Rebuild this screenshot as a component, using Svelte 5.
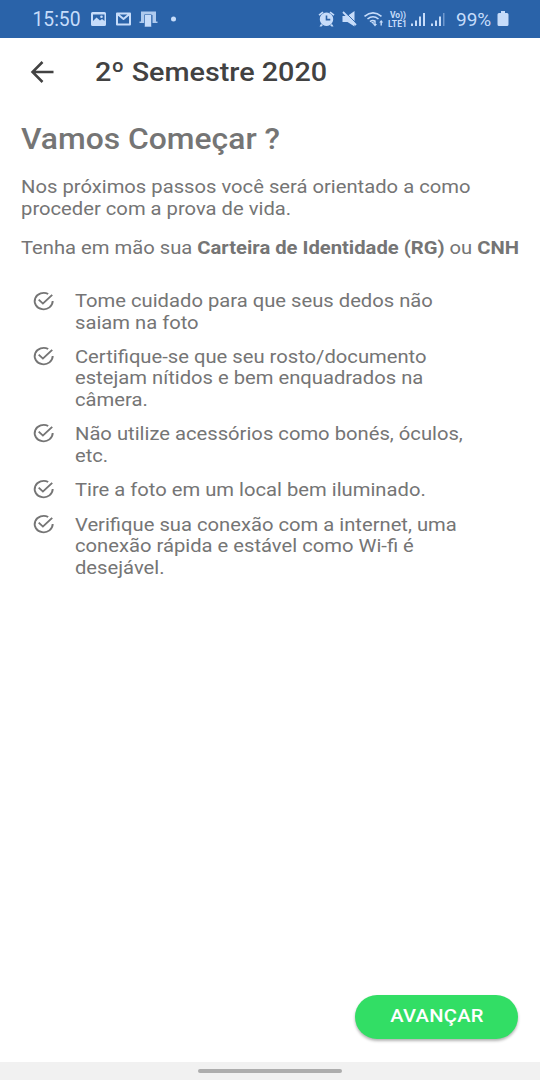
<script lang="ts">
  const tips: string[][] = [
    ["Tome cuidado para que seus dedos não", "saiam na foto"],
    ["Certifique-se que seu rosto/documento", "estejam nítidos e bem enquadrados na", "câmera."],
    ["Não utilize acessórios como bonés, óculos,", "etc."],
    ["Tire a foto em um local bem iluminado."],
    ["Verifique sua conexão com a internet, uma", "conexão rápida e estável como Wi-fi é", "desejável."],
  ];
</script>

<div class="screen">
  <header class="status">
    <span class="clock">15:50</span>
    <svg width="90" height="20" viewBox="88 9 90 20" fill="currentColor">
      <path fill-rule="evenodd" d="M92.500 12h12q1.500 0 1.500 1.500v11q0 1.500-1.500 1.500h-12q-1.500 0-1.500-1.500v-11q0-1.500 1.500-1.500zM93 14.500v6.500l3.500-3.500 3.500 3 2-1.500 2.500 2v-6.500z" />
      <circle cx="101.500" cy="16.700" r="1.300" />
      <path d="M117 24.500v-11h13v11zM117.500 14l6 5 6-5" fill="none" stroke="currentColor" stroke-width="2" stroke-linejoin="round" />
      <path d="M141 11.500h15v10h1.500v1.500h-5v-8h-8v8h-5v-1.500h1.500z" opacity=".85" />
      <rect x="144.500" y="14.500" width="7" height="12.500" rx=".5" stroke="#2a63a9" stroke-width=".6" />
      <circle cx="173.500" cy="19" r="2.500" />
    </svg>
    <svg class="signals" width="128" height="20" viewBox="318 9 128 20" fill="currentColor">
      <path d="M318.500 14.500l4-3 1 1.300-4 3zM334.500 14.500l-4-3-1 1.300 4 3zM321 24l-1.500 2.500h2l1.500-1.500zM332 24l1.500 2.500h-2l-1.500-1.500z" />
      <path fill-rule="evenodd" d="M326.500 12.500a6.700 6.700 0 1 0 .01 0zM325.700 15.500h1.600v3.300h3v1.600h-4.600z" />
      <path d="M342.500 16h5l7-5v15.500l-7-4.500h-5z" />
      <path d="M345 12l12 12" stroke="#2a63a9" stroke-width="1" />
      <path d="M343 12l13 13" stroke="currentColor" stroke-width="1.800" />
      <g fill="none" stroke="currentColor" stroke-width="1.600">
        <path d="M364.500 16.300q8.500-7 17 0M367.500 19q5.500-4.500 11 0M370 21.700q2.500-2 5-.5" />
      </g>
      <path d="M371 22.500l2.500-1 .5 3zM375.700 20.500v3.500h1.300l-2 2.500-2-2.500h1.300v-3.500zM380.500 25.500v-3h-1.300l2-2.500 2 2.500h-1.300v3z" />
      <text class="network" x="390" y="18" textLength="16">Vo))</text>
      <text class="network" x="388" y="26.500" textLength="19">LTE1</text>
      <path d="M411 23.500h2v2.500h-2zM415 20.500h2v5.500h-2zM419 16.500h2v9.500h-2zM423 13h2v13h-2zM431 23.500h2v2.500h-2zM435 20.500h2v5.500h-2zM439 16.500h2v9.500h-2z" />
      <path d="M443 13h1.500v13h-1.500z" opacity=".45" />
    </svg>
    <span class="percent">99%</span>
    <svg width="12" height="16" viewBox="0 0 12 16" fill="currentColor">
      <path d="M4 0h4v2h2q1.500 0 1.500 1.500v10q0 1.500-1.500 1.500h-8q-1.500 0-1.500-1.500v-10q0-1.500 1.500-1.500h2z" />
    </svg>
  </header>

  <nav class="appbar">
    <svg width="24" height="24" viewBox="0 0 24 24" fill="none" stroke="currentColor" stroke-width="2.500">
      <path d="M23.500 12h-21M12.500 2l-10 10 10 10" />
    </svg>
    <span class="title">2º Semestre 2020</span>
  </nav>

  <main>
    <h1>Vamos Começar ?</h1>
    <p>Nos próximos passos você será orientado a como<br />proceder com a prova de vida.</p>
    <p>Tenha em mão sua <b>Carteira de Identidade (RG)</b> ou <b>CNH</b></p>

    <ul>
      {#each tips as lines}
        <li>
          <svg width="20.200" height="20.200" viewBox="0 0 22 22" fill="none" stroke="currentColor" stroke-width="1.900">
            <path d="M15.500 3.200a9 9 0 1 0 4.500 7.800" />
            <path d="M6 9.500l4.200 4.200 9.300-9.500" />
          </svg>
          <div>
            {#each lines as line}
              <span class="line">{line}</span>
            {/each}
          </div>
        </li>
      {/each}
    </ul>
  </main>

  <footer>
    <button><span>AVANÇAR</span></button>
  </footer>
  <div class="gesture"><i></i></div>
</div>

<style>
  :global(body) {
    background: #fff;
  }

  .screen {
    display: flex;
    flex-direction: column;
    height: 1080px;
    overflow: hidden;
    color: #757575;
    font-family: Roboto, "Liberation Sans", sans-serif;
    font-size: 18.550px;
    line-height: 21.700px;
  }

  .status {
    display: flex;
    flex: none;
    align-items: center;
    box-sizing: border-box;
    height: 38px;
    padding-left: 32.500px;
    color: #c6dcfa;
    background: #2a63a9;
    font-size: 19px;
  }

  .clock {
    width: 55.500px;
    padding-top: 2px;
    font-size: 19.300px;
  }

  .signals {
    margin-left: 140px;
  }

  .network {
    font-size: 8.500px;
    font-weight: 700;
  }

  .percent {
    width: 41px;
    margin-left: 10px;
    padding-top: 2px;
  }

  .appbar {
    display: flex;
    align-items: center;
    height: 68px;
    padding-left: 30px;
    gap: 41px;
    color: #424242;
  }

  .title {
    padding-top: 2px;
    font-size: 26.400px;
    font-weight: 500;
    transform: scaleX(1.09);
    transform-origin: left;
  }

  /* the type is wider than Roboto's regular proportions */
  main {
    flex: 1;
    box-sizing: border-box;
    width: 495px;
    padding-left: 19.300px;
    transform: scaleX(1.09);
    transform-origin: left;
  }

  h1 {
    margin: 15px 0 20px;
    font-size: 29.200px;
    line-height: 36px;
    font-weight: 500;
  }

  p {
    margin: 0 0 17.300px;
    white-space: nowrap;
  }

  ul {
    display: grid;
    gap: 12.200px;
    margin: 31.700px 0 0;
    padding: 0 0 0 11px;
    list-style: none;
  }

  li {
    display: flex;
    gap: 18.300px;
    min-height: 22.900px;
  }

  li svg {
    margin-top: -0.500px;
  }

  .line {
    display: block;
    white-space: nowrap;
  }

  footer {
    display: flex;
    justify-content: flex-end;
    padding: 0 22px 23px;
  }

  button {
    width: 163px;
    height: 44px;
    padding: 0 0 3px;
    color: #fff;
    font: 500 18.500px Roboto, sans-serif;
    letter-spacing: 0.250px;
    background: #32de65;
    border: 0;
    border-radius: 22px;
    box-shadow: 0 2px 3px rgba(0, 0, 0, 0.3);
  }

  button span {
    display: inline-block;
    transform: scaleX(1.09);
  }

  .gesture {
    display: flex;
    align-items: center;
    justify-content: center;
    height: 18px;
    background: #f1f1f1;
  }

  .gesture i {
    width: 144px;
    height: 4px;
    border-radius: 2px;
    background: #adadad;
  }
</style>
